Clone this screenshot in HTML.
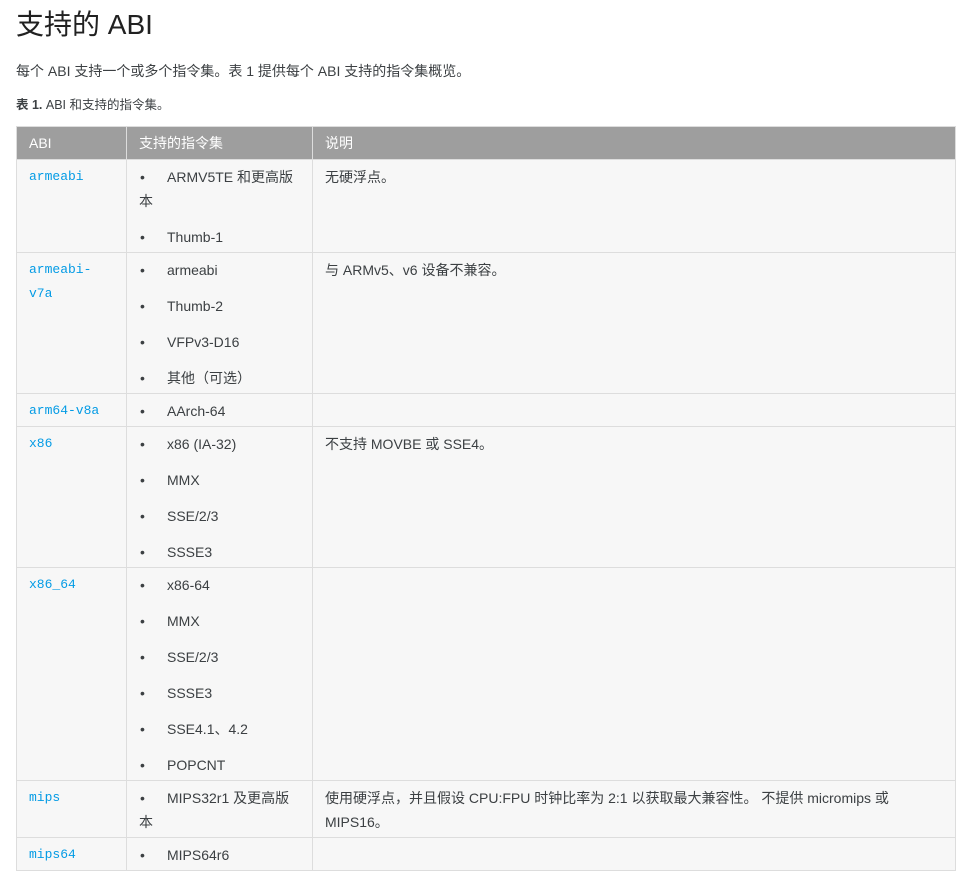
<!DOCTYPE html><html><head><meta charset="utf-8"><style>
body{margin:0;background:#fff;font-family:"Liberation Sans","Noto Sans CJK SC",sans-serif;color:#202124;}
h1{position:absolute;left:16px;top:5px;margin:0;font-size:28px;font-weight:400;line-height:40px;color:#212121}
p.a{position:absolute;left:16px;top:60px;margin:0;font-size:14px;line-height:22px;color:#3c4043}
p.c{position:absolute;left:16px;top:95px;margin:0;font-size:12.5px;line-height:20px;color:#3c4043}
table{position:absolute;left:16px;top:126px;width:940px;border-collapse:collapse;font-size:14px;color:#3c4043;table-layout:fixed}
th{background:#9e9e9e;color:#fff;font-weight:400;text-align:left;height:32px;padding:0 12px;border:1px solid #ddd;line-height:24px}
td{background:#f7f7f7;border:1px solid #ddd;vertical-align:top;padding:0 12px;line-height:24px}
td>div{overflow:visible;padding-top:5px;box-sizing:border-box}
code{font-family:"Liberation Mono",monospace;color:#039be5;font-size:13px}
code span{display:block;height:24px;line-height:24px}
ul{margin:0;padding:0;list-style:none}
li{margin:0 0 12px;line-height:24px}li:last-child{margin:0}
li>i,td span.l{display:block;height:24px;line-height:24px;font-style:normal;white-space:nowrap}
li b{display:inline-block;width:27px;font-weight:400;padding-left:1px}
</style></head><body>
<h1>支持的 ABI</h1>
<p class="a">每个 ABI 支持一个或多个指令集。表 1 提供每个 ABI 支持的指令集概览。</p>
<p class="c"><strong>表 1.</strong> ABI 和支持的指令集。</p>
<table>
<colgroup><col style="width:110px"><col style="width:186px"><col></colgroup>
<tr><th>ABI</th><th>支持的指令集</th><th>说明</th></tr>
<tr><td><div style="height:92px"><code><span>armeabi</span></code></div></td><td><div style="height:92px"><ul><li><i><b>•</b>ARMV5TE 和更高版</i><i>本</i></li><li><i><b>•</b>Thumb-1</i></li></ul></div></td><td><div style="height:92px"><span class="l">无硬浮点。</span></div></td></tr>
<tr><td><div style="height:140px"><code><span>armeabi-</span><span>v7a</span></code></div></td><td><div style="height:140px"><ul><li><i><b>•</b>armeabi</i></li><li><i><b>•</b>Thumb-2</i></li><li><i><b>•</b>VFPv3-D16</i></li><li><i><b>•</b>其他（可选）</i></li></ul></div></td><td><div style="height:140px"><span class="l">与 ARMv5、v6 设备不兼容。</span></div></td></tr>
<tr><td><div style="height:32px"><code><span>arm64-v8a</span></code></div></td><td><div style="height:32px"><ul><li><i><b>•</b>AArch-64</i></li></ul></div></td><td><div style="height:32px"></div></td></tr>
<tr><td><div style="height:140px"><code><span>x86</span></code></div></td><td><div style="height:140px"><ul><li><i><b>•</b>x86 (IA-32)</i></li><li><i><b>•</b>MMX</i></li><li><i><b>•</b>SSE/2/3</i></li><li><i><b>•</b>SSSE3</i></li></ul></div></td><td><div style="height:140px"><span class="l">不支持 MOVBE 或 SSE4。</span></div></td></tr>
<tr><td><div style="height:212px"><code><span>x86_64</span></code></div></td><td><div style="height:212px"><ul><li><i><b>•</b>x86-64</i></li><li><i><b>•</b>MMX</i></li><li><i><b>•</b>SSE/2/3</i></li><li><i><b>•</b>SSSE3</i></li><li><i><b>•</b>SSE4.1、4.2</i></li><li><i><b>•</b>POPCNT</i></li></ul></div></td><td><div style="height:212px"></div></td></tr>
<tr><td><div style="height:56px"><code><span>mips</span></code></div></td><td><div style="height:56px"><ul><li><i><b>•</b>MIPS32r1 及更高版</i><i>本</i></li></ul></div></td><td><div style="height:56px"><span class="l">使用硬浮点，并且假设 CPU:FPU 时钟比率为 2:1 以获取最大兼容性。 不提供 micromips 或</span><span class="l">MIPS16。</span></div></td></tr>
<tr><td><div style="height:32px"><code><span>mips64</span></code></div></td><td><div style="height:32px"><ul><li><i><b>•</b>MIPS64r6</i></li></ul></div></td><td><div style="height:32px"></div></td></tr>
</table>
</body></html>
